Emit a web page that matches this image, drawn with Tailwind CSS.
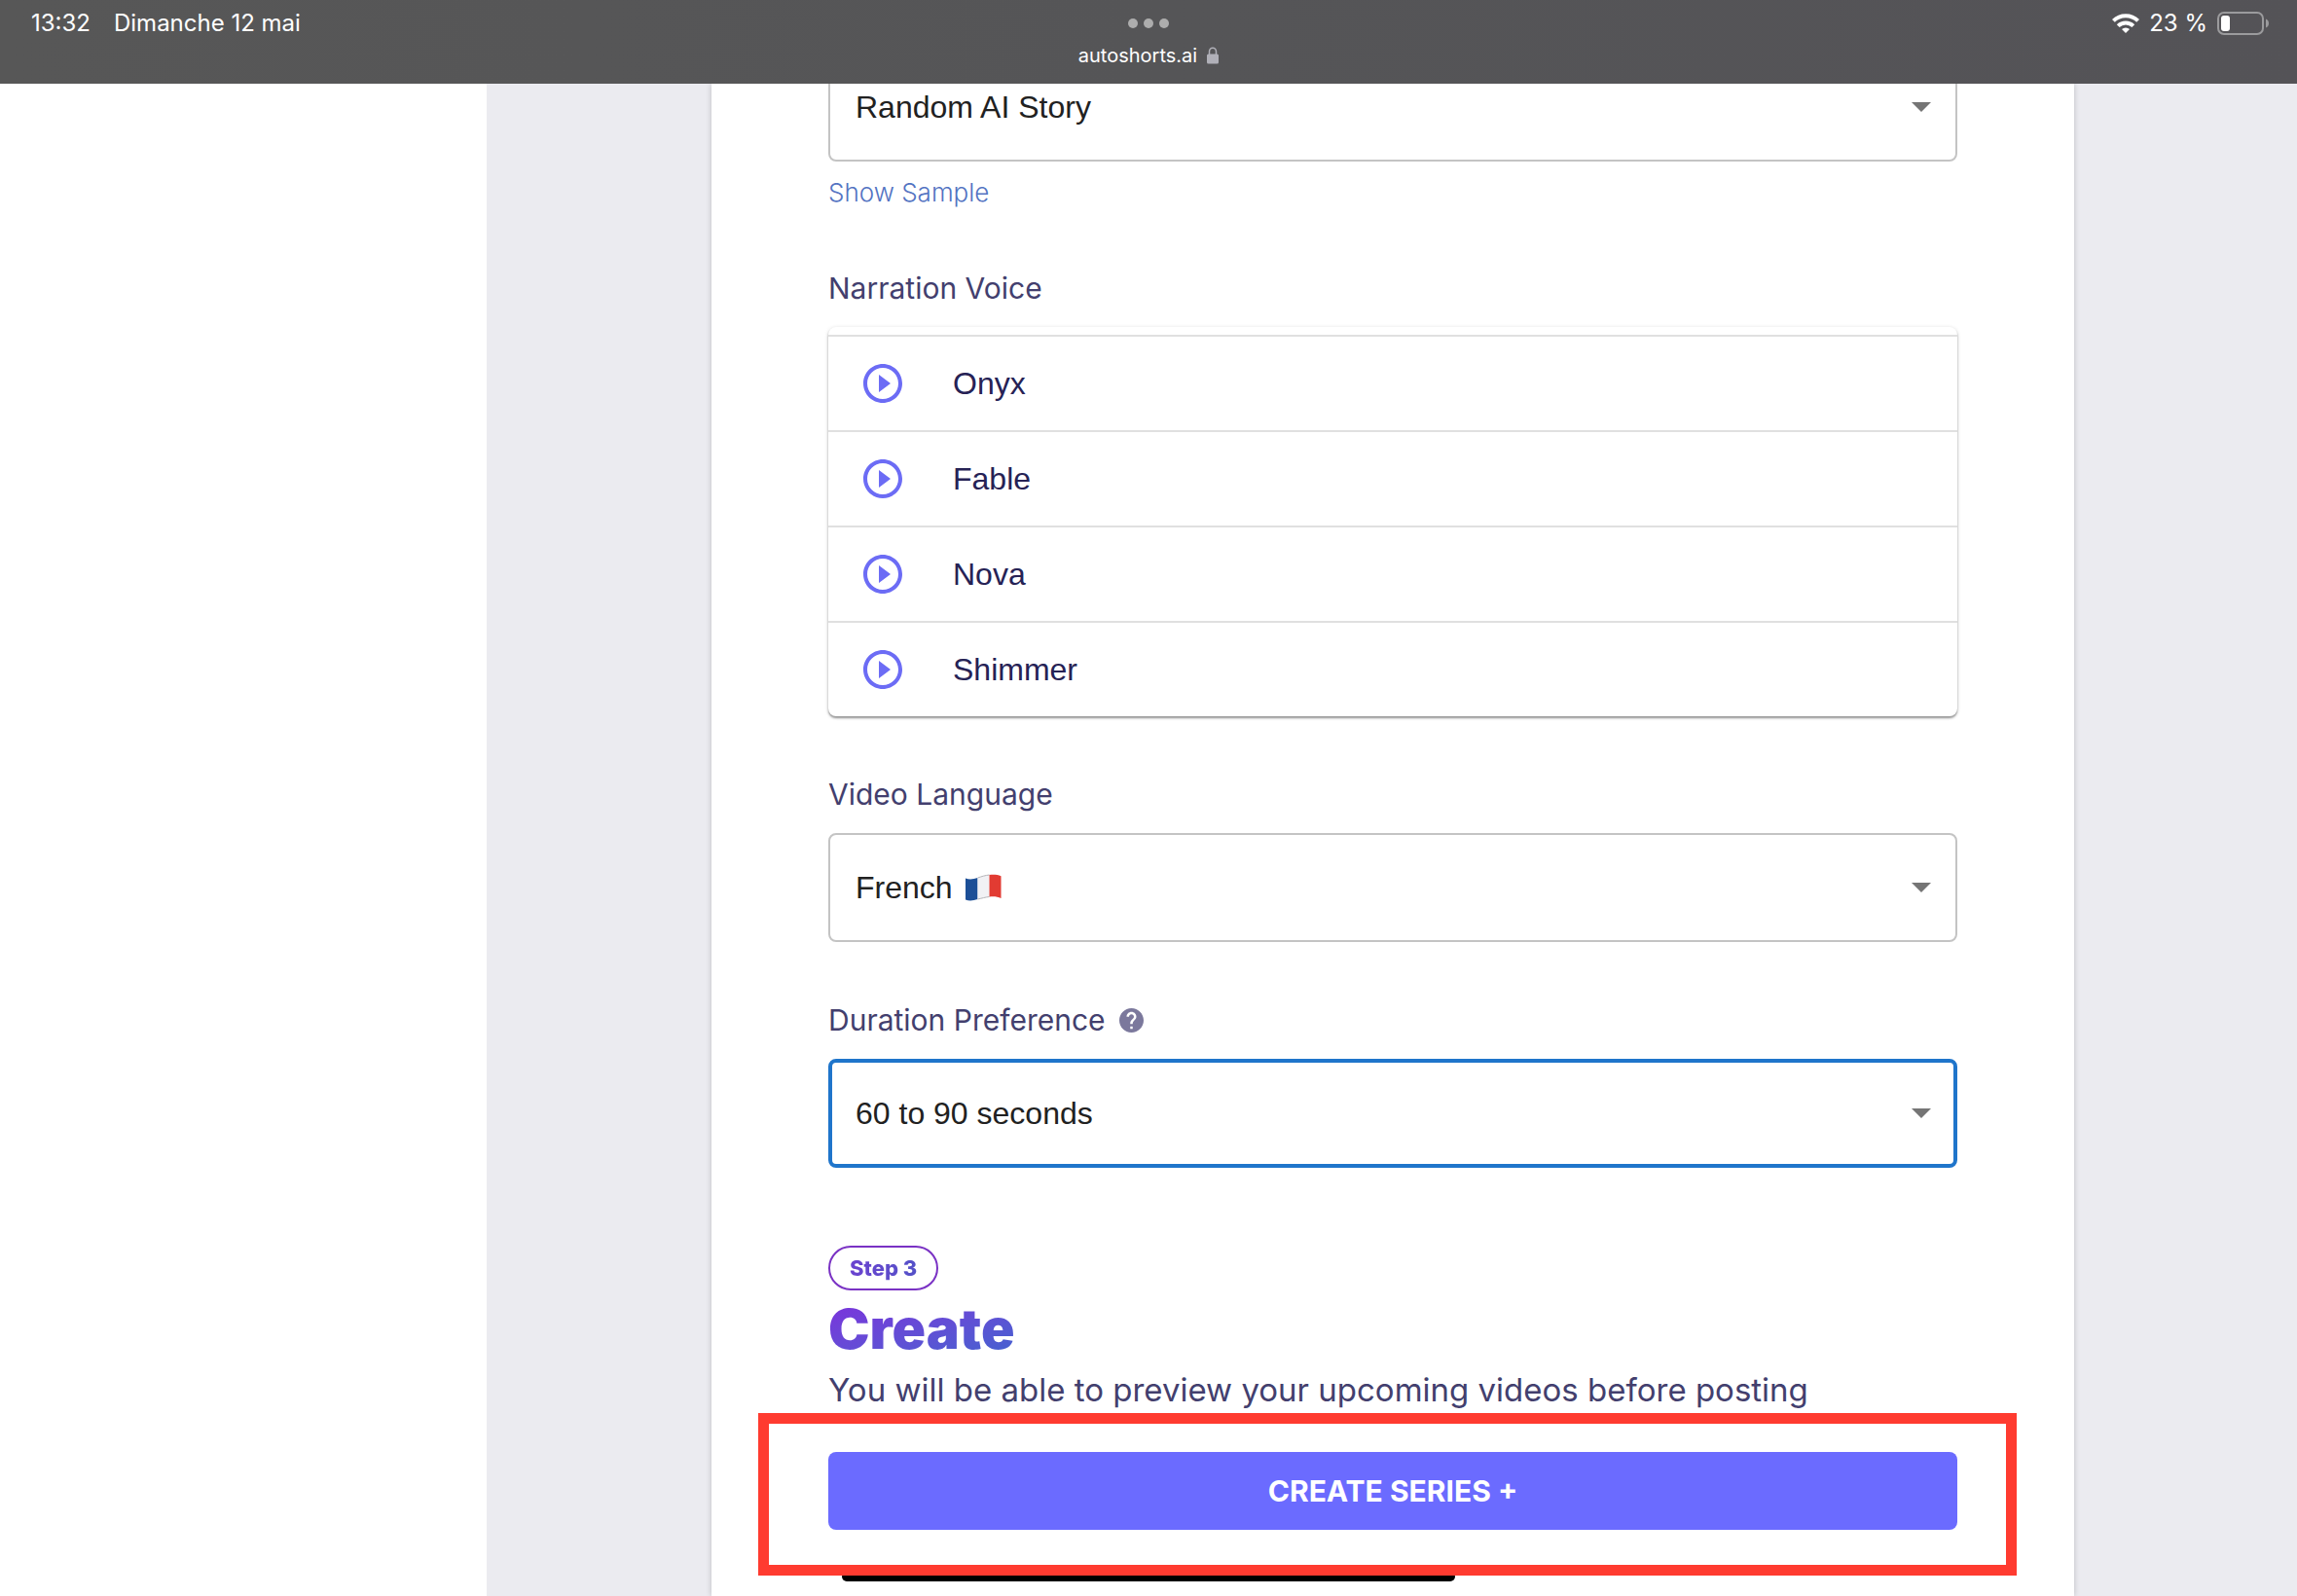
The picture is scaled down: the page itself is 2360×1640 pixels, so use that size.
<!DOCTYPE html>
<html lang="en">
<head>
<meta charset="utf-8">
<meta name="viewport" content="width=device-width, initial-scale=1">
<title>autoshorts.ai</title>
<script src="https://cdn.jsdelivr.net/npm/@tailwindcss/browser@4"></script>
</head>
<body class="relative flex min-h-screen flex-col overflow-x-hidden bg-white font-[Inter,sans-serif]">

<header class="relative z-10 grid h-[86px] grid-cols-3 items-start bg-linear-to-r from-[#575757] via-[#555557] to-[#545357] px-8 text-white">
  <div class="flex gap-6 pt-2 text-2xl">
    <time>13:32</time>
    <span>Dimanche 12 mai</span>
  </div>
  <div class="flex flex-col items-center pt-[19px]">
    <button type="button" aria-label="Window controls" class="flex gap-1.5">
      <span class="size-2.5 rounded-full bg-[#adadad]"></span>
      <span class="size-2.5 rounded-full bg-[#adadad]"></span>
      <span class="size-2.5 rounded-full bg-[#adadad]"></span>
    </button>
    <div class="mt-3.5 flex items-center gap-2.5 text-xl leading-7">
      <span>autoshorts.ai</span>
      <svg class="h-[18px] w-3" viewBox="0 0 12 18" aria-hidden="true"><path d="M2.5 9V5a3.5 3.8 0 0 1 7 0v4" fill="none" stroke="#b0b0b8" stroke-width="1.5"/><rect y="7.5" width="12" height="10" rx="1.6" fill="#b0b0b8"/></svg>
    </div>
  </div>
  <div class="-mr-1 flex items-center justify-end gap-2.5 pt-2 text-2xl">
    <svg class="h-5 w-7" viewBox="0 0 28 20" aria-label="Wi-Fi"><g fill="none" stroke="#fff" stroke-width="4"><path d="M1.400 7.400a18 18 0 0 1 25.200 0"/><path d="M6.200 12.600a11.200 11.200 0 0 1 15.600 0"/></g><path d="M14 20l-4-4a5.800 5.800 0 0 1 8 0z" fill="#fff"/></svg>
    <span>23 %</span>
    <svg class="h-6 w-[54px]" viewBox="0 0 54 24" aria-label="Battery"><rect x="1" y="1" width="46" height="22" rx="6" fill="none" stroke="#9b9b9d" stroke-width="2"/><rect x="4" y="4" width="9" height="16" rx="3" fill="#fff"/><path d="M50 7.500c4 1.500 4 7.500 0 9z" fill="#9b9b9d"/></svg>
  </div>
</header>

<div class="flex flex-1">
  <aside class="w-[500px] shrink-0 bg-white"></aside>
  <main class="flex flex-1 justify-center overflow-hidden bg-[#ebebf0] pl-0.5">
    <form class="flex w-full max-w-[1400px] flex-col items-stretch bg-white px-[120px] pb-16 text-[#433f6e] shadow-[0_0_6px_rgba(0,0,0,0.2)]">

      <div class="relative -mt-8">
        <select aria-label="Content" class="h-28 w-full appearance-none rounded-lg border-2 border-[#c4c4c4] bg-white px-[26px] font-['Liberation_Sans',Arial,sans-serif] text-[32px] text-[#212121]"><option>Random AI Story</option></select>
        <svg class="pointer-events-none absolute top-8 right-[13px] size-12" viewBox="0 0 24 24" fill="#757575" aria-hidden="true"><path d="M7 9.500l5 5 5-5z"/></svg>
      </div>
      <a href="#sample" class="mt-4 self-start text-[26px] leading-8 font-light text-[#5373c2]">Show Sample</a>

      <h2 id="voice" class="mt-[62px] text-[30px] leading-10">Narration Voice</h2>
      <ul aria-labelledby="voice" class="mt-5 rounded-lg bg-white pt-2 font-['Liberation_Sans',Arial,sans-serif] text-[32px] text-[#262255] shadow-[0_2px_2px_rgba(0,0,0,0.35),0_1px_4px_rgba(0,0,0,0.16)]">
        <li class="flex h-[98px] items-center gap-12 border-t-2 border-[#e0e0e0] px-8">
          <button type="button" aria-label="Play Onyx"><svg class="size-12" viewBox="0 0 24 24" fill="#6c6cf5"><path d="M12 2C6.480 2 2 6.480 2 12s4.480 10 10 10 10-4.480 10-10S17.520 2 12 2zm0 18c-4.410 0-8-3.590-8-8s3.590-8 8-8 8 3.590 8 8-3.590 8-8 8zM10 16.500l6-4.500-6-4.500z"/></svg></button>
          <span>Onyx</span>
        </li>
        <li class="flex h-[98px] items-center gap-12 border-t-2 border-[#e0e0e0] px-8">
          <button type="button" aria-label="Play Fable"><svg class="size-12" viewBox="0 0 24 24" fill="#6c6cf5"><path d="M12 2C6.480 2 2 6.480 2 12s4.480 10 10 10 10-4.480 10-10S17.520 2 12 2zm0 18c-4.410 0-8-3.590-8-8s3.590-8 8-8 8 3.590 8 8-3.590 8-8 8zM10 16.500l6-4.500-6-4.500z"/></svg></button>
          <span>Fable</span>
        </li>
        <li class="flex h-[98px] items-center gap-12 border-t-2 border-[#e0e0e0] px-8">
          <button type="button" aria-label="Play Nova"><svg class="size-12" viewBox="0 0 24 24" fill="#6c6cf5"><path d="M12 2C6.480 2 2 6.480 2 12s4.480 10 10 10 10-4.480 10-10S17.520 2 12 2zm0 18c-4.410 0-8-3.590-8-8s3.590-8 8-8 8 3.590 8 8-3.590 8-8 8zM10 16.500l6-4.500-6-4.500z"/></svg></button>
          <span>Nova</span>
        </li>
        <li class="flex h-[98px] items-center gap-12 border-t-2 border-[#e0e0e0] px-8">
          <button type="button" aria-label="Play Shimmer"><svg class="size-12" viewBox="0 0 24 24" fill="#6c6cf5"><path d="M12 2C6.480 2 2 6.480 2 12s4.480 10 10 10 10-4.480 10-10S17.520 2 12 2zm0 18c-4.410 0-8-3.590-8-8s3.590-8 8-8 8 3.590 8 8-3.590 8-8 8zM10 16.500l6-4.500-6-4.500z"/></svg></button>
          <span>Shimmer</span>
        </li>
      </ul>

      <label for="language" class="mt-15 self-start text-[30px] leading-10">Video Language</label>
      <div class="relative mt-5">
        <select id="language" class="h-28 w-full appearance-none rounded-lg border-2 border-[#c4c4c4] bg-white px-[26px] font-['Liberation_Sans',Arial,sans-serif] text-[32px] text-[#212121]"><option>French</option></select>
        <svg class="pointer-events-none absolute top-[42px] left-[141px] h-7 w-[37px]" viewBox="0 0 37 28" aria-label="French flag"><path d="M0 4.500C4 6 8 5.500 12.500 4V26C8 27.500 4 28 0 26.500z" fill="#1c4f97"/><path d="M12.500 4C17 2.500 20 1.500 24.500 1V23.500C20 24 17 25 12.500 26z" fill="#f1f1f4"/><path d="M12.500 4C17 2.500 20 1.500 24.500 1M12.500 26C17 25 20 24 24.500 23.500" fill="none" stroke="#b5b5b9" stroke-width="1"/><path d="M24.500 1C29 .600 33 .800 36.500 2.200V25C33 23.300 29 23 24.500 23.500z" fill="#e23b32"/></svg>
        <svg class="pointer-events-none absolute top-8 right-[13px] size-12" viewBox="0 0 24 24" fill="#757575" aria-hidden="true"><path d="M7 9.500l5 5 5-5z"/></svg>
      </div>

      <div class="mt-15 flex items-center gap-3.5">
        <label for="duration" class="text-[30px] leading-10">Duration Preference</label>
        <svg class="size-[25px]" viewBox="2 2 20 20" fill="#7b789c" aria-label="Help"><path d="M12 2C6.480 2 2 6.480 2 12s4.480 10 10 10 10-4.480 10-10S17.520 2 12 2zm1 17h-2v-2h2v2zm2.070-7.750l-.9.920C13.450 12.900 13 13.500 13 15h-2v-.5c0-1.100.450-2.100 1.170-2.830l1.240-1.260c.370-.360.590-.860.590-1.410 0-1.100-.9-2-2-2s-2 .9-2 2H8c0-2.210 1.790-4 4-4s4 1.790 4 4c0 .880-.360 1.680-.930 2.250z"/></svg>
      </div>
      <div class="relative mt-5">
        <select id="duration" class="h-28 w-full appearance-none rounded-lg border-4 border-[#1f75cb] bg-white px-6 font-['Liberation_Sans',Arial,sans-serif] text-[32px] text-[#212121]"><option>60 to 90 seconds</option></select>
        <svg class="pointer-events-none absolute top-8 right-[13px] size-12" viewBox="0 0 24 24" fill="#757575" aria-hidden="true"><path d="M7 9.500l5 5 5-5z"/></svg>
      </div>

      <div class="mt-20 flex h-[46px] items-center self-start rounded-full border-2 border-[#7a32c4] px-5">
        <span class="bg-linear-to-r from-[#6a42cf] to-[#5451c8] bg-clip-text text-[22px] leading-8 font-extrabold text-transparent">Step 3</span>
      </div>
      <h1 class="mt-2.5 self-start bg-linear-to-br from-[#7b2fdc] to-[#3f62cf] bg-clip-text text-[57px] leading-[60px] font-black text-transparent">Create</h1>
      <p class="mt-2.5 text-[33px] leading-11">You will be able to preview your upcoming videos before posting</p>
      <div class="relative mt-[42px]">
        <button type="submit" class="h-20 w-full rounded-lg bg-[#6b6bff] text-[30px] font-bold text-white uppercase">Create Series +</button>
        <div class="pointer-events-none absolute -inset-x-[72px] -top-10 -bottom-[47px] z-20 mr-[11px] border-[11px] border-[#ff3b30]"></div>
      </div>
    </form>
  </main>
</div>

<div class="absolute bottom-[15px] left-1/2 h-2.5 w-[630px] -translate-x-1/2 rounded-full bg-black"></div>
</body>
</html>
